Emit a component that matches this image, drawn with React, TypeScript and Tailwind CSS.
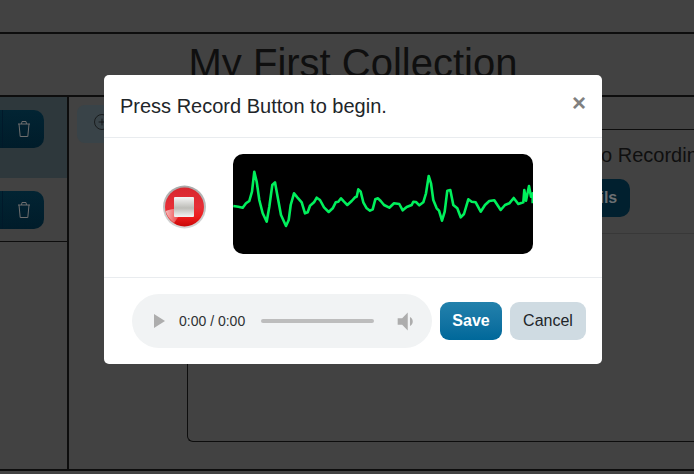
import { CirclePlus } from "lucide-react";

const a: [number, number][] = [[280,198],[295,200],[308,203],[318,190],[328,183],[336,155],[343,95],[350,125],[358,180],[368,220],[380,245],[388,200],[397,135],[405,127],[412,165],[423,225],[438,258],[446,240],[452,195],[462,160],[472,172],[485,187],[495,220],[503,217],[510,197],[522,187],[530,173],[540,180],[552,202],[566,216],[578,205],[587,187],[595,185],[603,175],[612,185],[622,195],[635,183],[645,172],[650,170],[655,148],[662,155],[670,187],[680,205]];
const b: [number, number][] = [[0,212],[8,208],[16,178],[24,175],[32,183],[42,195],[58,203],[72,190],[88,192],[98,211],[110,201],[125,195],[130,185],[138,186],[148,196],[160,187],[168,160],[176,108],[183,130],[190,180],[200,205],[207,212],[216,242],[224,215],[232,152],[241,150],[250,195],[262,205],[272,232],[282,222],[295,178],[305,185],[317,187],[332,215],[345,195],[358,183],[373,181],[392,210],[405,195],[418,190],[431,174],[445,192],[460,187],[463,150],[468,182],[477,138],[483,170],[488,160],[488,190]];
const points = [
  ...a.map(([x, y]) => `${(140 + x / 3 - 233).toFixed(1)},${(140 + y / 3 - 154).toFixed(1)}`),
  ...b.map(([x, y]) => `${(370 + x / 3 - 233).toFixed(1)},${(140 + y / 3 - 154).toFixed(1)}`),
].join(" ");

function SideRow({ selected }: { selected?: boolean }) {
  return (
    <div className={selected ? "h-[81px] bg-[#2e383c] pt-[13px]" : "h-[64px] border-b border-[#0d0d0d] pt-[13px]"}>
      <div className="flex h-[38px] w-[44px] items-center rounded-r-[10px] bg-gradient-to-b from-[#022433] to-[#001c2a]">
        <div className="h-full w-[3px] border-r border-[#01192a]" />
        <svg width="14" height="18" viewBox="0 0 14 18" fill="none" stroke="#6e6e6e" strokeWidth="1" className="ml-[14px] shrink-0">
          <path d="M1 4 H13" />
          <path d="M4.5 4 L5 1.5 H9 L9.5 4" />
          <path d="M2 4 L3.2 16.5 H10.8 L12 4" />
        </svg>
      </div>
    </div>
  );
}

function RecordButton() {
  return (
    <svg width="44" height="44" viewBox="0 0 44 44" className="mt-[6px] block shrink-0">
      <defs>
        <linearGradient id="ring" x1="0" y1="0" x2="0" y2="1">
          <stop offset="0" stopColor="#a8a8a8" />
          <stop offset="1" stopColor="#d8d8d8" />
        </linearGradient>
        <linearGradient id="red" x1="0" y1="0" x2="0" y2="1">
          <stop offset="0" stopColor="#d8262e" />
          <stop offset="0.5" stopColor="#e63038" />
          <stop offset="0.75" stopColor="#ee1c1c" />
          <stop offset="1" stopColor="#c80808" />
        </linearGradient>
        <linearGradient id="gloss" x1="0" y1="0" x2="1" y2="0">
          <stop offset="0" stopColor="#f8c4c4" stopOpacity="0.95" />
          <stop offset="1" stopColor="#f4b0b0" stopOpacity="0" />
        </linearGradient>
        <linearGradient id="sq" x1="0" y1="0" x2="0" y2="1">
          <stop offset="0" stopColor="#f5f5f5" />
          <stop offset="0.55" stopColor="#bdbdb8" />
          <stop offset="1" stopColor="#f4f4f4" />
        </linearGradient>
      </defs>
      <circle cx="21.5" cy="22" r="21.5" fill="url(#ring)" />
      <circle cx="21.5" cy="22" r="19.5" fill="url(#red)" />
      <path d="M2.6 26 C8 24 14 23 21 24 L11 38 C7 35 4 31 2.6 26 Z" fill="url(#gloss)" />
      <rect x="11" y="12" width="20" height="20" rx="1" fill="url(#sq)" />
    </svg>
  );
}

export default function App() {
  return (
    <div className="relative h-[474px] w-[694px] overflow-hidden bg-[#424242] font-['Liberation_Sans',Arial,sans-serif]">
      <div className="h-[32px]" />
      <div className="flex h-[65px] items-center justify-center border-y-2 border-[#0d0d0d] pb-[4px] pl-[12px]">
        <h1 className="text-[40px] leading-[48px] text-[#0f0f0f]">My First Collection</h1>
      </div>
      <div className="flex h-[374px] border-b-2 border-[#0d0d0d]">
        <aside className="w-[69px] shrink-0 border-r-2 border-[#0d0d0d]">
          <SideRow selected />
          <SideRow />
        </aside>
        <main className="flex min-w-0 flex-1 items-start pl-[8px] pt-[8px]">
          <div className="flex h-[38px] w-[102px] shrink-0 items-center rounded-[8px] bg-[#394348] pb-[4px] pl-[16px]">
            <CirclePlus size={18} strokeWidth={1} className="text-[#0f0f0f]" />
          </div>
          <div className="ml-[8px] mt-[24px] h-[313px] w-[600px] shrink-0 rounded-l-[6px] border-y border-l border-[#0d0d0d]">
            <div className="flex h-[104px] border-b border-[#383838] pl-[364px] pt-[13px]">
              <div className="flex flex-col">
                <div className="pl-[9px] text-[20px] leading-[24px] text-[#0f0f0f]">Audio Recording</div>
                <div className="mt-[12px] flex h-[38px] w-[78px] items-center justify-center rounded-[10px] bg-[#01202f] text-[16px] font-bold text-[#6b6f72]">
                  Details
                </div>
              </div>
            </div>
          </div>
        </main>
      </div>

      <div className="absolute left-[104px] top-[75px] flex h-[289px] w-[498px] flex-col rounded-[5px] bg-white">
        <div className="flex h-[63px] shrink-0 items-start justify-between border-b border-[#e9ecef] px-[16px]">
          <h5 className="mt-[19px] text-[20px] leading-[24px] text-[#212529]">Press Record Button to begin.</h5>
          <span className="mt-[10px] text-[24px] font-bold leading-[36px] text-[#808080]">×</span>
        </div>
        <div className="flex h-[140px] shrink-0 items-center border-b border-[#e9ecef] pb-[23px] pl-[59px] pt-[16px]">
          <RecordButton />
          <div className="ml-[26px] h-[100px] w-[300px] overflow-hidden rounded-[10px] bg-black">
            <svg width="300" height="100" viewBox="0 0 300 100" className="block">
              <polyline points={points} fill="none" stroke="#00f05c" strokeWidth="2.6" strokeLinejoin="round" />
            </svg>
          </div>
        </div>
        <div className="flex flex-1 items-center pl-[28px]">
          <div className="flex h-[54px] w-[300px] items-center rounded-[27px] bg-[#f1f3f4]">
            <svg width="12" height="14" viewBox="0 0 12 14" className="ml-[22px] shrink-0">
              <path d="M0 0 L11 7 L0 14 Z" fill="#adadad" />
            </svg>
            <span className="ml-[13px] whitespace-nowrap text-[14px] leading-[16px] text-[#2e3133]">0:00 / 0:00</span>
            <div className="ml-[16px] h-[4px] w-[113px] shrink-0 rounded-[2px] bg-[#bdbdbd]" />
            <svg width="19" height="19" viewBox="3 3.5 14 17" className="ml-[22px] shrink-0">
              <path d="M3 9v6h4l5 5V4L7 9H3z M16.5 12c0-1.77-1.02-3.29-2.5-4.03v8.05c1.48-.73 2.5-2.25 2.5-4.02z" fill="#adadad" />
            </svg>
          </div>
          <button className="ml-[8px] h-[38px] w-[62px] rounded-[9px] bg-gradient-to-b from-[#2281ac] to-[#00689a] text-[16px] font-bold text-white">
            Save
          </button>
          <button className="ml-[8px] h-[38px] w-[76px] rounded-[9px] bg-[#cfdbe2] text-[16px] text-[#212529]">
            Cancel
          </button>
        </div>
      </div>
    </div>
  );
}
